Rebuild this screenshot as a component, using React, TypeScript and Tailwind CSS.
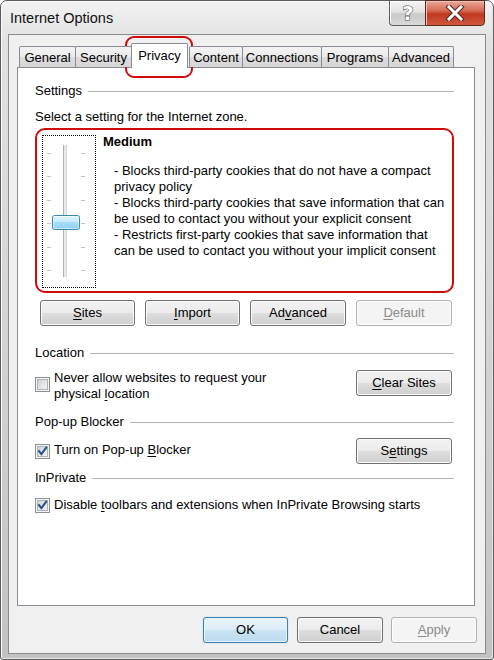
import React from "react";

function Btn({
  children,
  className = "",
  disabled = false,
  primary = false,
}: {
  children: React.ReactNode;
  className?: string;
  disabled?: boolean;
  primary?: boolean;
}) {
  let look =
    "border-[#707070] text-black bg-[linear-gradient(to_bottom,#f2f2f2_0%,#ebebeb_48%,#dddddd_52%,#cfcfcf_100%)] shadow-[inset_0_0_0_1px_#fbfbfb]";
  if (disabled)
    look = "border-[#adb2b5] text-[#8a8a8a] bg-[#f4f4f4] shadow-[inset_0_0_0_1px_#fcfcfc]";
  if (primary)
    look =
      "border-[#3c7fb1] text-black bg-[linear-gradient(to_bottom,#eaf4fb_0%,#dcedf8_48%,#c9e3f3_52%,#bcdcef_100%)] shadow-[inset_0_0_0_1px_#e4f3fc,0_0_1px_#6ab3e0]";
  return (
    <div
      className={`h-[26px] shrink-0 rounded-[3px] border flex items-center justify-center text-[13px] leading-[16px] ${look} ${className}`}
    >
      {children}
    </div>
  );
}

function U({ children }: { children: React.ReactNode }) {
  return <span className="underline underline-offset-[2px] decoration-[1px]">{children}</span>;
}

function Section({ label, className = "" }: { label: string; className?: string }) {
  return (
    <div className={`flex items-center h-[16px] ${className}`}>
      <span className="whitespace-nowrap">{label}</span>
      <div className="flex-1 h-px bg-[#b4b4b4] ml-[6px] mt-[1px]" />
    </div>
  );
}

function Check({ checked }: { checked: boolean }) {
  return (
    <svg width="15" height="15" viewBox="0 0 15 15" className="shrink-0">
      <defs>
        <linearGradient id={checked ? "cbg1" : "cbg0"} x1="0" y1="0" x2="1" y2="1">
          <stop offset="0" stopColor="#cbcfd5" />
          <stop offset="1" stopColor="#f7f7f7" />
        </linearGradient>
      </defs>
      <rect x="0.5" y="0.5" width="14" height="14" fill="#f4f4f4" stroke="#8e8f8f" />
      <rect x="2.5" y="2.5" width="10" height="10" fill={`url(#${checked ? "cbg1" : "cbg0"})`} stroke="#aeb3b9" strokeWidth="1" />
      {checked && (
        <path d="M4 7.2 L6.4 10.2 L11.2 3.6" fill="none" stroke="#2c4f8c" strokeWidth="2" strokeLinecap="square" />
      )}
    </svg>
  );
}

function Slider() {
  const ticks = [17, 40, 64, 87, 111, 134];
  return (
    <svg width="52" height="151" viewBox="0 0 52 151" className="block">
      {ticks.map((y) => (
        <g key={y}>
          <rect x="4" y={y} width="4" height="1" fill="#c4c4c4" />
          <rect x="38" y={y} width="4" height="1" fill="#c4c4c4" />
        </g>
      ))}
      <rect x="20" y="9" width="4" height="132" fill="#e7eaea" />
      <rect x="20" y="9" width="1" height="132" fill="#b0b0b0" />
      <rect x="23" y="9" width="1" height="132" fill="#d7d7d7" />
      <defs>
        <linearGradient id="thumb" x1="0" y1="0" x2="0" y2="1">
          <stop offset="0" stopColor="#e0f4fd" />
          <stop offset="0.45" stopColor="#c9ebfb" />
          <stop offset="0.5" stopColor="#a6dcf7" />
          <stop offset="1" stopColor="#8fd1f3" />
        </linearGradient>
      </defs>
      <rect x="9.5" y="79.5" width="27" height="14" rx="2" fill="url(#thumb)" stroke="#3789ad" />
      <rect x="10.5" y="80.5" width="25" height="12" rx="1" fill="none" stroke="#ffffff" strokeOpacity="0.5" />
    </svg>
  );
}

const tabBase =
  "h-[21px] mb-px pt-[1px] flex items-center justify-center border border-b-0 border-[#898c95] bg-[linear-gradient(to_bottom,#f3f3f3_0%,#ebebeb_50%,#dddddd_51%,#d6d6d6_100%)] rounded-t-[2px] shrink-0";

export default function App() {
  return (
    <div className="w-[494px] h-[660px] bg-white font-['Liberation_Sans',Arial,sans-serif] text-[13px] leading-[16px] text-black relative overflow-hidden">
      <div className="w-full h-full flex flex-col rounded-t-[7px] rounded-b-[3px] border border-[#5c5c5c] bg-[linear-gradient(to_bottom,#f2f2f2_0%,#e2e2e2_6%,#d4d4d4_50%,#c2c2c2_100%)] shadow-[inset_1px_1px_0_#fafafa,inset_-1px_-1px_0_#e6e6e6]">
        {/* Title bar */}
        <div className="h-[33px] flex items-start justify-between shrink-0">
          <div className="pl-[9px] pt-[9px] text-[14.5px] leading-[17px] text-[#111] whitespace-nowrap">
            Internet Options
          </div>
          <div className="flex mr-[8px] mt-[-1px]">
            <div className="w-[36px] h-[26px] border border-[#5f5f5f] border-r-0 rounded-bl-[4px] bg-[linear-gradient(to_bottom,#f4f4f4_0%,#e3e3e3_45%,#c9c9c9_55%,#d9d9d9_100%)] shadow-[inset_1px_1px_0_#ffffff] flex items-center justify-center">
              <svg width="20" height="20" viewBox="0 0 20 20">
                <text
                  x="10"
                  y="17"
                  textAnchor="middle"
                  fontFamily="'DejaVu Sans', sans-serif"
                  fontWeight="bold"
                  fontSize="19"
                  fill="#ffffff"
                  stroke="#555"
                  strokeWidth="1.2"
                  paintOrder="stroke"
                >
                  ?
                </text>
              </svg>
            </div>
            <div className="w-[60px] h-[26px] border border-[#5a2a22] rounded-br-[4px] bg-[linear-gradient(to_bottom,#e9a99a_0%,#d66a52_40%,#c0391f_55%,#d2583c_100%)] shadow-[inset_1px_1px_0_#f0c2b6] flex items-center justify-center">
              <svg width="20" height="16" viewBox="0 0 20 16">
                <path d="M4 2 L16 14 M16 2 L4 14" stroke="#4a2a26" strokeWidth="5" strokeLinecap="square" />
                <path d="M4 2 L16 14 M16 2 L4 14" stroke="#ffffff" strokeWidth="3" strokeLinecap="square" />
              </svg>
            </div>
          </div>
        </div>

        {/* Client area */}
        <div className="mx-[7px] mb-[5px] flex-1 border border-[#8a8a8a] bg-[#f0f0f0] flex flex-col">
          {/* Tabs */}
          <div className="h-[33px] -mb-px flex items-end pl-[10px] relative z-10 shrink-0">
            <div className={`${tabBase} w-[57px]`}>General</div>
            <div className={`${tabBase} w-[57px] -ml-px`}>Security</div>
            <div className="h-[25px] w-[57px] -ml-px flex items-center justify-center border border-b-0 border-[#898c95] bg-white rounded-t-[2px] shrink-0 pb-[1px] relative z-10">
              Privacy
            </div>
            <div className={`${tabBase} w-[54px] ml-px`}>Content</div>
            <div className={`${tabBase} w-[80px] -ml-px`}>Connections</div>
            <div className={`${tabBase} w-[68px] -ml-px`}>Programs</div>
            <div className={`${tabBase} w-[66px] -ml-px`}>Advanced</div>
          </div>

          {/* Panel */}
          <div className="ml-[8px] w-[458px] h-[539px] border border-[#898c95] bg-white pl-[17px] pr-[20px] pt-[15px] flex flex-col shrink-0">
            <Section label="Settings" />
            <div className="mt-[10px] whitespace-nowrap">Select a setting for the Internet zone.</div>

            <div className="mt-[3px] h-[165px] border-2 border-[#d10a0a] rounded-[10px] flex items-start">
              <div className="ml-[5px] mt-[5px] w-[54px] h-[153px] border border-dotted border-black shrink-0">
                <Slider />
              </div>
              <div className="ml-[7px] pt-[4px] flex flex-col">
                <div className="font-bold">Medium</div>
                <div className="pl-[11px] mt-[13px] whitespace-nowrap">
                  <div>- Blocks third-party cookies that do not have a compact</div>
                  <div>privacy policy</div>
                  <div>- Blocks third-party cookies that save information that can</div>
                  <div>be used to contact you without your explicit consent</div>
                  <div>- Restricts first-party cookies that save information that</div>
                  <div>can be used to contact you without your implicit consent</div>
                </div>
              </div>
            </div>

            <div className="mt-[7px] ml-[5px] flex gap-[10px]">
              <Btn className="w-[95px]">
                <U>S</U>ites
              </Btn>
              <Btn className="w-[95px]">
                <U>I</U>mport
              </Btn>
              <Btn className="w-[96px]">
                Ad<U>v</U>anced
              </Btn>
              <Btn className="w-[96px]" disabled>
                <U>D</U>efault
              </Btn>
            </div>

            <Section label="Location" className="mt-[19px]" />
            <div className="mt-[9px] flex justify-between items-start">
              <div className="flex items-start">
                <div className="mt-[7px]">
                  <Check checked={false} />
                </div>
                <div className="ml-[4px] whitespace-nowrap">
                  <div>Never allow websites to request your</div>
                  <div>
                    physical <U>l</U>ocation
                  </div>
                </div>
              </div>
              <Btn className="w-[96px] mr-[2px]">
                <U>C</U>lear Sites
              </Btn>
            </div>

            <Section label="Pop-up Blocker" className="mt-[12px]" />
            <div className="mt-[8px] h-[26px] flex justify-between items-center">
              <div className="flex items-center">
                <Check checked={true} />
                <div className="ml-[4px] whitespace-nowrap mt-[-2px]">
                  Turn on Pop-up <U>B</U>locker
                </div>
              </div>
              <Btn className="w-[96px] mr-[2px]">
                S<U>e</U>ttings
              </Btn>
            </div>

            <Section label="InPrivate" className="mt-[6px]" />
            <div className="mt-[11px] flex items-center">
              <Check checked={true} />
              <div className="ml-[4px] whitespace-nowrap">
                Disable <U>t</U>oolbars and extensions when InPrivate Browsing starts
              </div>
            </div>
          </div>

          {/* Bottom buttons */}
          <div className="mt-[11px] flex justify-end pr-[8px]">
            <Btn className="w-[85px]" primary>
              OK
            </Btn>
            <Btn className="w-[86px] ml-[9px]">Cancel</Btn>
            <Btn className="w-[86px] ml-[8px]" disabled>
              <U>A</U>pply
            </Btn>
          </div>
        </div>
      </div>

      {/* Red annotation around Privacy tab */}
      <div className="absolute left-[125px] top-[36px] w-[68px] h-[42px] border-2 border-[#d10a0a] rounded-[9px] pointer-events-none" />
    </div>
  );
}
